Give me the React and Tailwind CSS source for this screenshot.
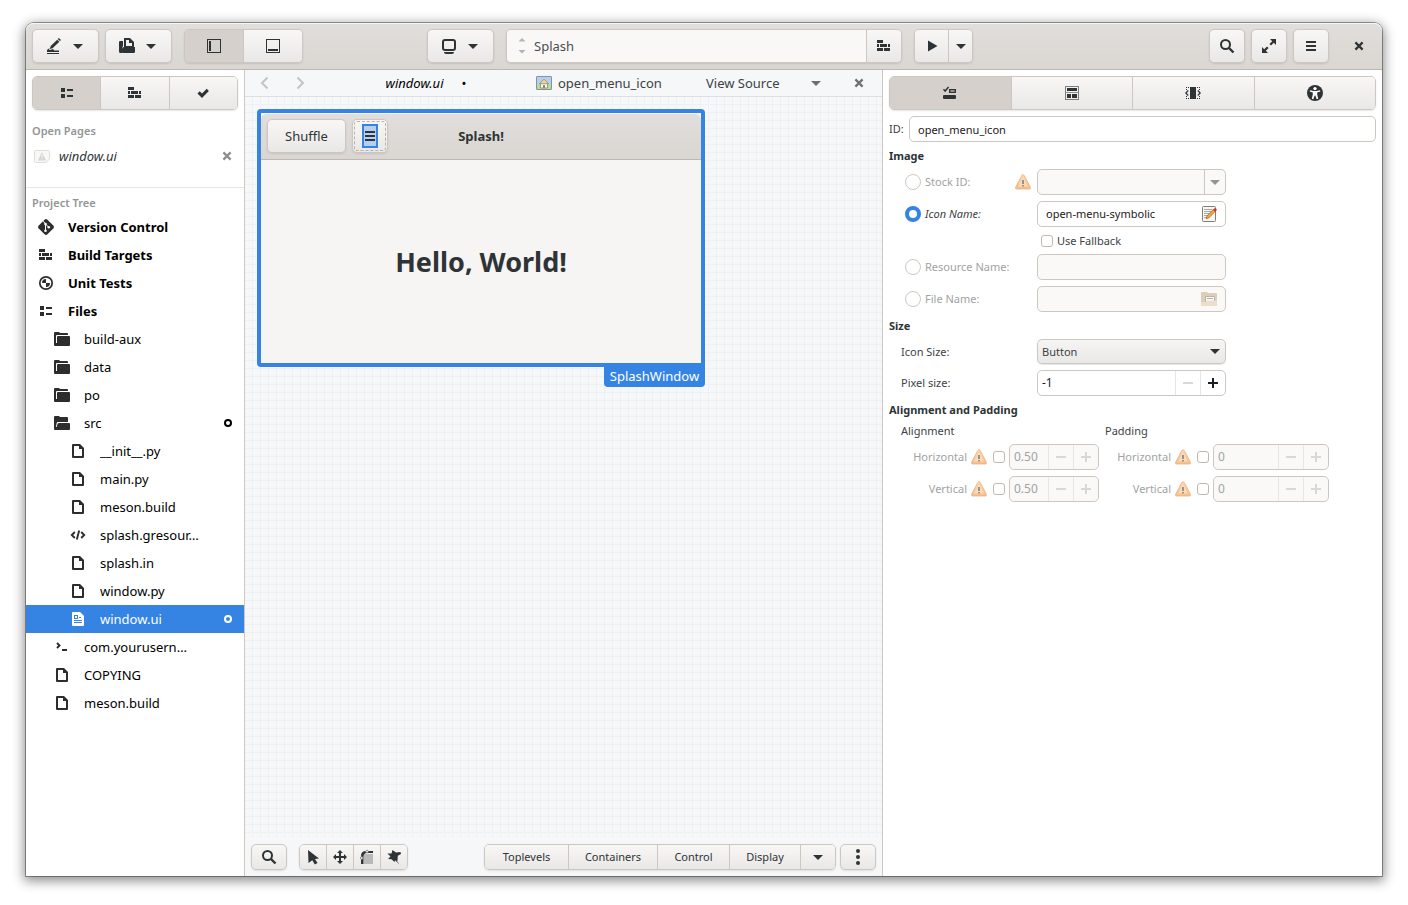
import React from "react";

const FACE =
  "bg-linear-to-b from-[#f8f7f6] to-[#eae8e6] border-[#cdc7c2] text-[#2e3436] flex items-center justify-center";
const FRAME = "border border-[#cdc7c2] rounded-[5px] overflow-hidden shadow-[0_1px_2px_rgba(0,0,0,0.1)]";
const ENTRY = "h-[26px] rounded-[5px] border border-[#cdc7c2]";

function Icon({ children, size = "size-4", className = "" }) {
  return (
    <svg viewBox="0 0 16 16" aria-hidden="true" fill="currentColor" className={`${size} shrink-0 ${className}`}>
      {children}
    </svg>
  );
}

const Caret = ({ className = "" }) => (
  <Icon className={className}>
    <path d="M3 6h10L8 11z" />
  </Icon>
);
const Pencil = () => (
  <Icon>
    <path d="M12.800 0 15 2 13.900 3.100 11.700 1.100zM11.200 1.700l2.200 2L6.500 10.200 3.800 11l.9-3z" />
    <path d="M3.600 10 3 11.800l1 .3 3-1 1.200 1.400H13V14H1v-2z" />
    <path d="M1 15h12v1H1z" />
  </Icon>
);
const Open = () => (
  <Icon>
    <path fillRule="evenodd" d="M5 0h6l4 4v6H5zm2 2v6h6V5h-3V2z" />
    <path d="M1 3h3v5l-1 2v5H1.500Q0 15 0 13.500V4q0-1 1-1z" />
    <path d="M5 9h11v4.500q0 1.500-1.500 1.500H4q-1 0-1-1v-3q0-2 2-2z" />
  </Icon>
);
const PanelLeft = () => (
  <Icon>
    <path fillRule="evenodd" d="M1 1h14v14H1zm1 1v12h12V2z" />
    <path d="M3 3h2v10H3z" />
  </Icon>
);
const PanelBottom = () => (
  <Icon>
    <path fillRule="evenodd" d="M1 1h14v14H1zm1 1v12h12V2z" />
    <path d="M3 11h10v2H3z" />
  </Icon>
);
const Monitor = () => (
  <Icon>
    <rect x="2" y="2" width="12" height="10" rx="2" fill="none" stroke="currentColor" strokeWidth="2" />
    <path d="M3 14h10q0 2-2 2H5q-2 0-2-2z" />
  </Icon>
);
const ListIcon = () => (
  <Icon>
    <path d="M2 3h4v4H2zM2 9h4v4H2zM8 4h6v2H8zM8 10h6v2H8z" />
  </Icon>
);
const Bricks = () => (
  <Icon>
    <path d="M1 2h6v3H1zM1 6h2v3H1zM4 6h7v3H4zM12 6h2v3h-2zM1 10h6v3H1zM8 10h6v3H8z" />
  </Icon>
);
const Check = () => (
  <Icon>
    <path d="M2.500 8.500 4.700 6.300 7 8.500 11.700 3.800 13.900 6 7 12.900z" />
  </Icon>
);
const Play = () => (
  <Icon>
    <path d="M4 2.500v11L13.500 8z" />
  </Icon>
);
const Search = () => (
  <Icon>
    <circle cx="6.500" cy="6.500" r="4.500" fill="none" stroke="currentColor" strokeWidth="2" />
    <path d="M10 10l4.500 4.500" stroke="currentColor" strokeWidth="2.400" />
  </Icon>
);
const Expand = () => (
  <Icon>
    <path d="M9 1h6v6l-2.200-2.200L10 7.600 8.400 6l2.800-2.800zM1 9l2.200 2.200L6 8.400 7.600 10l-2.800 2.800L7 15H1z" />
  </Icon>
);
const Menu = () => (
  <Icon>
    <path d="M3 3h10v2H3zM3 7h10v2H3zM3 11h10v2H3z" />
  </Icon>
);
const Close = () => (
  <Icon>
    <path d="M4.400 4.400l7.200 7.200M11.600 4.400l-7.200 7.200" stroke="currentColor" strokeWidth="2.200" />
  </Icon>
);
const Git = () => (
  <Icon>
    <path d="M8 0Q8.700 0 9.200.5L15.500 6.800Q16.300 8 15.500 9.200L9.200 15.500Q8 16.300 6.800 15.500L.5 9.200Q-.3 8 .5 6.800L6.800.5Q7.300 0 8 0z" />
    <path d="M5.200 2.200 7.500 4.800V12M7.500 5l3.200 3.200" fill="none" stroke="#fff" strokeWidth="1" />
    <circle cx="7.500" cy="5" r="1.300" fill="#fff" />
    <circle cx="7.500" cy="11.800" r="1.300" fill="#fff" />
    <circle cx="10.800" cy="8.300" r="1.300" fill="#fff" />
  </Icon>
);
const Tests = () => (
  <Icon>
    <circle cx="8" cy="8" r="6.200" fill="none" stroke="currentColor" strokeWidth="1.700" />
    <path d="M8 8H4a4 4 0 0 1 4-4zM8 8h4a4 4 0 0 1-4 4z" />
  </Icon>
);
const Folder = () => (
  <Icon>
    <path d="M0 2q0-1 1-1h4l1 1h7q1 0 1 1v1H3Q2 4 2 5v9H1q-1 0-1-1z" />
    <path d="M4 5h11q1 0 1 1v8q0 1-1 1H4q-1 0-1-1V6q0-1 1-1z" />
    <path d="M0 12h4v3H1q-1 0-1-1z" />
  </Icon>
);
const FolderOpen = () => (
  <Icon>
    <path d="M0 2q0-1 1-1h4l1 1h7q1 0 1 1v4H4Q3 7 2.700 8L1.500 13.800Q0 14 0 13z" />
    <path d="M5 8h10q1 0 1 1v5q0 1-1 1H3q-1 0-.8-1L3.500 9Q4 8 5 8z" />
    <path d="M0 12h3v3H1q-1 0-1-1z" />
  </Icon>
);
const FileIcon = () => (
  <Icon>
    <path fillRule="evenodd" d="M3 1h7l4 4v9q0 1-1 1H3q-1 0-1-1V2q0-1 1-1zm1 2v10h8V6H9V3z" />
  </Icon>
);
const FileFilled = () => (
  <Icon>
    <path d="M3 1h7l4 4v9q0 1-1 1H3q-1 0-1-1V2q0-1 1-1z" />
    <path d="M4 4h4v4H4zM9 6h2v1H9zM4 9h8v1H4zM4 11h8v1H4z" fill="#3584e4" />
    <path d="M5 5h2v2H5z" fill="#fff" />
  </Icon>
);
const Code = () => (
  <Icon>
    <path
      d="M4.800 5 1.800 8l3 3M11.200 5l3 3-3 3M9.200 3.500 6.800 12.500"
      fill="none"
      stroke="currentColor"
      strokeWidth="1.900"
    />
  </Icon>
);
const Prompt = () => (
  <Icon>
    <path d="M3 4l2.500 2.500L3 9" fill="none" stroke="currentColor" strokeWidth="1.900" />
    <path d="M8 10h5v2H8z" />
  </Icon>
);
const Ring = () => (
  <Icon>
    <circle cx="8" cy="8" r="3" fill="none" stroke="currentColor" strokeWidth="2" />
  </Icon>
);
const PageThumb = () => (
  <Icon>
    <path d="M1.500 2.500h13q1 0 1 1v7l-3 4h-11q-1 0-1-1v-10q0-1 1-1z" fill="#f8f8f7" stroke="#dedddb" />
    <path d="M8 4l4 8.500H4z" fill="#d5d4d2" />
    <path d="M7.500 6.500h1v3h-1zM7.500 10.200h1v1h-1z" fill="#fff" />
  </Icon>
);
const ImageIcon = () => (
  <Icon>
    <rect x=".5" y="1.500" width="15" height="13" rx=".5" fill="#b3d1f8" stroke="#8d9091" />
    <path d="M1 10h14v4H1z" fill="#b5e18b" />
    <path d="M4.500 8.500 8 5l3.500 3.500V13h-7z" fill="#f8f6f2" stroke="#8d8678" strokeWidth=".8" />
    <path d="M3.500 8.700 8 4.200l4.500 4.500z" fill="#f2dc8b" stroke="#94855b" strokeWidth=".8" />
    <path d="M7 10h2v3H7z" fill="#8d8678" />
  </Icon>
);
const Warning = () => (
  <Icon>
    <defs>
      <linearGradient id="warn" x1="0" y1="0" x2="0" y2="1">
        <stop offset="0" stopColor="#fbd9b0" />
        <stop offset="1" stopColor="#f5bd8d" />
      </linearGradient>
    </defs>
    <path
      d="M8 .7Q8.800.7 9.200 1.500L15.400 13.200Q15.900 15 14.600 15H1.400Q.1 15 .6 13.200L6.800 1.500Q7.200.7 8 .7z"
      fill="url(#warn)"
      stroke="#efae80"
      strokeWidth=".8"
    />
    <path d="M8 3.200l4.800 9.300H3.200z" fill="#fce6c6" opacity=".7" />
    <path d="M7 6h2v4H7zM7 11h2v1.500H7z" fill="#96938e" />
  </Icon>
);
const Chevron = ({ d }) => (
  <Icon>
    <path d={d} fill="none" stroke="currentColor" strokeWidth="2" />
  </Icon>
);
const Properties = () => (
  <Icon>
    <path d="M1.500 4.200 3.200 6 6.500 2" fill="none" stroke="currentColor" strokeWidth="1.500" />
    <rect x="7.700" y="4.700" width="5.600" height="2.600" fill="none" stroke="currentColor" strokeWidth="1.400" />
    <rect x="1" y="10" width="13" height="4" rx="1" />
  </Icon>
);
const Packing = () => (
  <Icon>
    <path fillRule="evenodd" opacity=".6" d="M1 1h14v14H1zm1 1v12h12V2z" />
    <path d="M3 3h10v3H3zM3 9h4v4H3zM8 9h5v4H8z" />
    <path d="M2 7h12v1H2z" opacity=".5" />
  </Icon>
);
const Common = () => (
  <Icon>
    <path d="M5 2h6v12H5z" />
    <path d="M3.200 5.500.8 8l2.400 2.500M12.800 5.500 15.200 8l-2.400 2.500" fill="none" stroke="currentColor" strokeWidth="1.300" />
    <path d="M1 2h1v1H1zM3 2h1v1H3zM1 13h1v1H1zM3 13h1v1H3zM12 2h1v1h-1zM14 2h1v1h-1zM12 13h1v1h-1zM14 13h1v1h-1zM1 4h1v1H1zM14 4h1v1h-1zM1 11h1v1H1zM14 11h1v1h-1z" />
  </Icon>
);
const Access = () => (
  <Icon>
    <circle cx="8" cy="8" r="8" />
    <circle cx="8" cy="3.600" r="1.700" fill="#fff" />
    <path d="M3 5.200 6.500 6h3l3.500-.8.300 1.300-3.100 1v2l1 4.300-1.500.4L8.300 10.500h-.6L6.300 14.200l-1.500-.4 1-4.300v-2l-3.100-1z" fill="#fff" />
  </Icon>
);
const Pointer = () => (
  <Icon>
    <path d="M3 1l11 8.500-4 .5 2.500 4-2.700 1.500L7.300 11.300 3.500 14z" />
  </Icon>
);
const Move = () => (
  <Icon>
    <path d="M8 1l3 3H9v3h3V5l3 3-3 3V9H9v3h2l-3 3-3-3h2V9H4v2L1 8l3-3v2h3V4H5z" />
  </Icon>
);
const Margin = () => (
  <Icon>
    <path d="M5 5h9v10H5z" fill="#b9b9b8" />
    <path d="M2 15V7q0-5 5-5h7v2H8Q4.500 4 4.500 8v7z" />
    <circle cx="8" cy="2.500" r="1.300" fill="#f6f5f4" stroke="#777" strokeWidth=".8" />
    <circle cx="2.700" cy="9" r="1.300" fill="#f6f5f4" stroke="#777" strokeWidth=".8" />
  </Icon>
);
const Pin = () => (
  <Icon>
    <path d="M6.500 1 10 3.500 14.500 3 15 5 11.800 6.800 11.500 12 10.500 11.500 13.500 15.500 9 11.200 8.500 13 5.500 10.200 2 10 4.500 7.500 1.500 4.500 5.500 4.500z" />
  </Icon>
);
const Kebab = () => (
  <Icon>
    <circle cx="8" cy="2" r="2" />
    <circle cx="8" cy="8" r="2" />
    <circle cx="8" cy="14" r="2" />
  </Icon>
);
const Minus = () => (
  <Icon>
    <path d="M3 7h10v2H3z" />
  </Icon>
);
const Plus = () => (
  <Icon>
    <path d="M7 3h2v4h4v2H9v4H7V9H3V7h4z" />
  </Icon>
);
const EditNote = () => (
  <Icon>
    <rect x="1.500" y=".5" width="13" height="15" rx="1" fill="#f6f6f5" stroke="#7d7f7c" />
    <path d="M3 3h8v1H3zM3 5h7v1H3zM3 7h6v1H3zM3 9h5v1H3zM3 11h3v1H3z" fill="#a9aba8" />
    <path d="M5 12.800 6 10l6-6.400 2 2L7.800 12z" fill="#f4a73b" stroke="#8f5902" strokeWidth=".6" />
    <path d="M12 3.600l1.300-1.200q1.200-.6 2 .3t.1 1.900L14 5.700z" fill="#d92b2b" />
  </Icon>
);
const FolderDoc = () => (
  <Icon>
    <path d="M1 1h5l1 1h8q1 0 1 1v11q0 1-1 1H1q-1 0-1-1V2q0-1 1-1z" fill="#dccfb5" />
    <path d="M4.500 5.500h9v6h-9z" fill="#fbfaf8" stroke="#b9b3a8" strokeWidth="1" />
    <path d="M6 7h6v1H6z" fill="#b3b0aa" />
    <path d="M0 11h5l1-1.500h10V14q0 1-1 1H1q-1 0-1-1z" fill="#e9dfca" />
  </Icon>
);

function HeaderButton({ label, width, children }) {
  return (
    <button aria-label={label} className={`${FACE} ${FRAME} h-[34px] ${width}`}>
      {children}
    </button>
  );
}

function Switcher({ items, className = "" }) {
  return (
    <div className={`${FRAME} flex h-[34px] ${className}`}>
      {items.map(([label, Glyph, active], i) => (
        <button
          key={label}
          aria-label={label}
          aria-pressed={!!active}
          className={`flex flex-1 items-center justify-center text-[#2e3436] ${i ? "border-l border-[#cdc7c2]" : ""} ${
            active ? "bg-[#d5d0cc]" : "bg-linear-to-b from-[#f8f7f6] to-[#eae8e6]"
          }`}
        >
          <Glyph />
        </button>
      ))}
    </div>
  );
}

function TitleBar() {
  return (
    <header className="grid h-[47px] grid-cols-[1fr_auto_1fr] items-center rounded-t-lg border-b border-[#bfb8b1] bg-linear-to-b from-[#e1dedb] to-[#dad6d2] px-[6px] shadow-[inset_0_1px_#f6f5f4]">
      <div className="flex">
        <HeaderButton label="New" width="w-[67px] gap-2">
          <Pencil />
          <Caret />
        </HeaderButton>
        <div className="ml-[6px]">
          <HeaderButton label="Open" width="w-[67px] gap-2">
            <Open />
            <Caret />
          </HeaderButton>
        </div>
        <Switcher
          className="ml-3 w-[119px]"
          items={[
            ["Left panel", PanelLeft, true],
            ["Bottom panel", PanelBottom],
          ]}
        />
      </div>
      <div className="mr-2 flex gap-3">
        <HeaderButton label="Device" width="w-[67px] gap-2">
          <Monitor />
          <Caret />
        </HeaderButton>
        <div className={`${FRAME} flex h-[34px] w-[396px]`}>
          <div className="flex flex-1 items-center gap-1 bg-[#f9f8f7] pl-[7px]">
            <Icon className="text-[#b3b3b1]">
              <path d="M4.500 3.500h7L8 0zM4.500 12h7L8 15.500z" />
            </Icon>
            <input
              aria-label="Project"
              defaultValue="Splash"
              className="min-w-0 flex-1 bg-transparent text-[#4a4f50] outline-none"
            />
          </div>
          <button aria-label="Build" className={`${FACE} w-[35px] border-l`}>
            <Bricks />
          </button>
        </div>
        <div className={`${FRAME} flex h-[34px] w-[59px]`}>
          <button aria-label="Run" className={`${FACE} flex-1`}>
            <Play />
          </button>
          <button aria-label="Run options" className={`${FACE} w-6 border-l`}>
            <Caret />
          </button>
        </div>
      </div>
      <div className="flex justify-end gap-[6px]">
        <HeaderButton label="Search" width="w-9">
          <Search />
        </HeaderButton>
        <HeaderButton label="Fullscreen" width="w-9">
          <Expand />
        </HeaderButton>
        <HeaderButton label="Menu" width="w-9">
          <Menu />
        </HeaderButton>
        <button aria-label="Close" className="ml-[6px] flex size-[35px] items-center justify-center text-[#2e3436]">
          <Close />
        </button>
      </div>
    </header>
  );
}

const TREE = [
  ["Version Control", Git, 0],
  ["Build Targets", Bricks, 0],
  ["Unit Tests", Tests, 0],
  ["Files", ListIcon, 0],
  ["build-aux", Folder, 1],
  ["data", Folder, 1],
  ["po", Folder, 1],
  ["src", FolderOpen, 1, true],
  ["__init__.py", FileIcon, 2],
  ["main.py", FileIcon, 2],
  ["meson.build", FileIcon, 2],
  ["splash.gresour…", Code, 2],
  ["splash.in", FileIcon, 2],
  ["window.py", FileIcon, 2],
  ["window.ui", FileFilled, 2, true],
  ["com.yourusern…", Prompt, 1],
  ["COPYING", FileIcon, 1],
  ["meson.build", FileIcon, 1],
];
const INDENT = ["pl-3 gap-[14px] font-bold", "pl-7 gap-[14px]", "pl-11 gap-[14px]"];

function Sidebar() {
  return (
    <aside className="w-[219px] shrink-0 border-r border-[#cdc7c2] bg-white text-black">
      <div className="p-[6px]">
        <Switcher
          items={[
            ["Project tree", ListIcon, true],
            ["Build targets", Bricks],
            ["Tasks", Check],
          ]}
        />
      </div>
      <h2 className="mt-[7px] px-[6px] text-[11px] leading-4 font-semibold text-[#929595]">Open Pages</h2>
      <div className="flex h-[34px] items-center px-2">
        <PageThumb />
        <span className="ml-[9px] flex-1 text-[#2e3436] italic">window.ui</span>
        <button aria-label="Close window.ui" className="mr-px text-[#8b8e8f]">
          <Close />
        </button>
      </div>
      <h2 className="mt-[14px] border-t border-[#e8e6e4] px-[6px] pt-[7px] pb-[2px] text-[11px] leading-4 font-semibold text-[#929595]">
        Project Tree
      </h2>
      <ul>
        {TREE.map(([name, Glyph, level, modified], i) => (
          <li key={i}>
            <button
              className={`flex h-7 w-full items-center pr-2 text-left ${INDENT[level]} ${
                name === "window.ui" ? "bg-[#3584e4] text-white" : ""
              }`}
            >
              <span className={name === "window.ui" ? "text-white" : "text-[#2d2d2d]"}>
                <Glyph />
              </span>
              <span className="flex-1 truncate">{name}</span>
              {modified && <Ring />}
            </button>
          </li>
        ))}
      </ul>
    </aside>
  );
}

function Preview() {
  return (
    <div className="flex w-[448px] flex-col items-end">
      <div className="w-full rounded-[4px] rounded-br-none border-4 border-[#3584e4] bg-[#f6f5f4]">
        <div className="grid h-[47px] grid-cols-[1fr_auto_1fr] items-center rounded-t-md border-b border-[#bfb8b1] bg-linear-to-b from-[#e1dedb] to-[#dad6d2] px-[6px] shadow-[inset_0_1px_#f6f5f4]">
          <div className="flex gap-[6px]">
            <button className={`${FACE} ${FRAME} h-[34px] w-[79px]`}>Shuffle</button>
            <button aria-label="Open menu" className={`${FACE} ${FRAME} h-[34px] w-9 p-px`}>
              <span className="flex h-full w-full items-center justify-center rounded-[3px] border border-dashed border-[#b5b2af]">
                <span className="flex h-6 w-4 items-center justify-center border-2 border-[#3584e4] bg-[#b4cff2]">
                  <Menu />
                </span>
              </span>
            </button>
          </div>
          <h2 className="font-bold text-[#2e3436]">Splash!</h2>
        </div>
        <p className="flex h-[203px] items-center justify-center text-[27px] font-bold text-[#2e3436]">Hello, World!</p>
      </div>
      <span className="h-5 w-[101px] rounded-b-[4px] bg-[#3584e4] text-center leading-[19px] text-white">
        SplashWindow
      </span>
    </div>
  );
}

const PALETTE = [
  ["Toplevels", "w-[83px]"],
  ["Containers", "w-[89px]"],
  ["Control", "w-[72px]"],
  ["Display", "w-[71px]"],
];

function Designer() {
  const seg = `${FACE} h-full border-l first:border-l-0`;
  return (
    <main className="flex min-w-0 flex-1 flex-col border-r border-[#cdc7c2] bg-[#f6f7f9]">
      <nav className="flex h-[27px] items-center border-b border-[#dcdee0] bg-[#f5f7f9] pl-1 text-[#3d4244]">
        <button aria-label="Back" className="flex w-8 justify-center text-[#c2c4c5]">
          <Chevron d="M10.500 2.500 5 8l5.500 5.500" />
        </button>
        <button aria-label="Forward" className="ml-[3px] flex w-8 justify-center text-[#c2c4c5]">
          <Chevron d="M5.500 2.500 11 8l-5.500 5.500" />
        </button>
        <button className="flex flex-1 items-center justify-center text-black">
          <span className="w-[76px] text-left italic">window.ui</span>
          <span>•</span>
        </button>
        <button className="flex w-32 items-center gap-[6px]">
          <ImageIcon />
          open_menu_icon
        </button>
        <button className="ml-[42px] w-[76px] text-left">View Source</button>
        <button aria-label="Views" className="ml-[26px] text-[#6e7172]">
          <Caret />
        </button>
        <button aria-label="Close page" className="mr-[15px] ml-[27px] text-[#6e7172]">
          <Close />
        </button>
      </nav>
      <section className="flex-1 bg-[linear-gradient(to_right,#eef0f2_1px,transparent_1px),linear-gradient(to_bottom,#eef0f2_1px,transparent_1px)] bg-[size:8px_8px] bg-[position:7px_7px] p-3">
        <Preview />
      </section>
      <footer className="flex h-[38px] items-center px-[6px] text-[11px] text-[#4a4f50]">
        <button aria-label="Zoom" className={`${FACE} ${FRAME} h-[26px] w-9`}>
          <Search />
        </button>
        <div className={`${FRAME} ml-3 flex h-[26px] w-[109px]`}>
          {[
            ["Select", Pointer],
            ["Drag", Move],
            ["Edit margins", Margin],
            ["Edit alignment", Pin],
          ].map(([label, Glyph]) => (
            <button key={label} aria-label={label} className={`${seg} flex-1`}>
              <Glyph />
            </button>
          ))}
        </div>
        <div className={`${FRAME} ml-auto flex h-[26px]`}>
          {PALETTE.map(([name, width]) => (
            <button key={name} className={`${seg} ${width}`}>
              {name}
            </button>
          ))}
          <button aria-label="More widgets" className={`${seg} w-[35px]`}>
            <Caret />
          </button>
        </div>
        <button aria-label="Options" className={`${FACE} ${FRAME} ml-1 h-[26px] w-9`}>
          <Kebab />
        </button>
      </footer>
    </main>
  );
}

const Radio = (props) => (
  <input
    type="radio"
    name="source"
    className="size-4 shrink-0 appearance-none rounded-full border border-[#cdc7c2] bg-white checked:border-4 checked:border-[#3584e4]"
    {...props}
  />
);
const Tick = (props) => (
  <input
    type="checkbox"
    className="size-3 shrink-0 appearance-none rounded-[3px] border border-[#bfb8b1] bg-white checked:bg-[#3584e4]"
    {...props}
  />
);

function SourceRow({ id, label, active, warn, children }) {
  return (
    <div className="flex items-center pl-4">
      <label className={`flex flex-1 items-center gap-1 ${active ? "italic" : "text-[#a0a3a3]"}`}>
        <Radio id={`${id}-radio`} defaultChecked={active} />
        {label}
      </label>
      {warn && <Warning />}
      <div className="ml-[6px] w-[189px]">{children}</div>
    </div>
  );
}

function Spin({ id, value, width, disabled, label, minusOff }) {
  const tone = disabled ? "bg-[#faf9f8] text-[#a0a3a3]" : "bg-white text-[#1c2021]";
  const off = "text-[#d9d8d6]";
  return (
    <div className={`${ENTRY} ${tone} flex overflow-hidden ${width}`}>
      <input
        id={id}
        aria-label={label}
        defaultValue={value}
        disabled={disabled}
        className="min-w-0 flex-1 bg-transparent pl-1 text-[12px] outline-none"
      />
      <button
        aria-label={`Decrease ${label}`}
        className={`flex w-[25px] items-center justify-center border-l border-[#e8e6e4] ${disabled || minusOff ? off : ""}`}
      >
        <Minus />
      </button>
      <button
        aria-label={`Increase ${label}`}
        className={`flex w-[25px] items-center justify-center border-l border-[#e8e6e4] ${disabled ? off : ""}`}
      >
        <Plus />
      </button>
    </div>
  );
}

function AxisGroup({ title, value, width }) {
  return (
    <fieldset className="flex flex-col">
      <legend className="leading-4">{title}</legend>
      <div className="mt-[5px] flex flex-col gap-[6px]">
        {["Horizontal", "Vertical"].map((axis) => {
          const id = `${title}-${axis}`;
          return (
            <div key={axis} className="flex items-center text-[#a0a3a3]">
              <label htmlFor={id} className="w-[66px] text-right">
                {axis}
              </label>
              <span className="mr-[6px] ml-1">
                <Warning />
              </span>
              <Tick aria-label={`Set ${axis} ${title}`} />
              <span className="ml-1">
                <Spin id={id} label={`${axis} ${title}`} value={value} width={width} disabled />
              </span>
            </div>
          );
        })}
      </div>
    </fieldset>
  );
}

function Inspector() {
  const heading = "font-bold leading-4 text-[#2e3436]";
  return (
    <aside className="w-[499px] shrink-0 bg-white p-[6px] text-[11px] text-[#3d4244]">
      <Switcher
        items={[
          ["General", Properties, true],
          ["Packing", Packing],
          ["Common", Common],
          ["Accessibility", Access],
        ]}
      />
      <div className="mt-[6px] flex items-center">
        <label htmlFor="object-id" className="w-5">
          ID:
        </label>
        <input
          id="object-id"
          defaultValue="open_menu_icon"
          className={`${ENTRY} min-w-0 flex-1 bg-white px-2 text-[#1c2021] outline-none`}
        />
      </div>
      <h3 className={`${heading} mt-[6px]`}>Image</h3>
      <div className="mt-[5px] flex w-[337px] flex-col gap-[6px]">
        <SourceRow id="stock" label="Stock ID:" warn>
          <div className={`${ENTRY} flex overflow-hidden bg-[#faf9f8]`}>
            <input aria-label="Stock ID" disabled className="min-w-0 flex-1 px-2 outline-none" />
            <button
              aria-label="Choose stock ID"
              className="flex w-[21px] items-center justify-center border-l border-[#cdc7c2] text-[#929595]"
            >
              <Caret />
            </button>
          </div>
        </SourceRow>
        <SourceRow id="icon" label="Icon Name:" active>
          <div className={`${ENTRY} flex items-center bg-white pr-2`}>
            <input
              aria-label="Icon name"
              defaultValue="open-menu-symbolic"
              className="min-w-0 flex-1 bg-transparent pl-2 text-[#1c2021] outline-none"
            />
            <button aria-label="Edit icon name">
              <EditNote />
            </button>
          </div>
        </SourceRow>
        <label className="ml-[152px] flex h-[15px] items-center gap-1">
          <Tick />
          Use Fallback
        </label>
        <SourceRow id="resource" label="Resource Name:">
          <input aria-label="Resource name" disabled className={`${ENTRY} block w-full bg-[#faf9f8] px-2`} />
        </SourceRow>
        <SourceRow id="file" label="File Name:">
          <div className={`${ENTRY} flex items-center bg-[#faf9f8] pr-2`}>
            <input aria-label="File name" disabled className="min-w-0 flex-1 bg-transparent pl-2" />
            <button aria-label="Browse">
              <FolderDoc />
            </button>
          </div>
        </SourceRow>
      </div>
      <h3 className={`${heading} mt-[6px]`}>Size</h3>
      <div className="mt-[5px] flex w-[337px] flex-col gap-[6px] pl-3">
        <div className="flex items-center">
          <label htmlFor="icon-size" className="flex-1">
            Icon Size:
          </label>
          <div className="relative w-[189px]">
            <select
              id="icon-size"
              className="block h-[25px] w-full appearance-none rounded-[5px] border border-[#cdc7c2] bg-linear-to-b from-[#f6f5f4] to-[#eae8e6] px-1 text-[#3d4244] shadow-[0_1px_1px_rgba(0,0,0,0.1)]"
            >
              <option>Button</option>
            </select>
            <Caret className="pointer-events-none absolute top-1 right-[3px] text-[#2e3436]" />
          </div>
        </div>
        <div className="flex items-center">
          <label htmlFor="pixel-size" className="flex-1">
            Pixel size:
          </label>
          <Spin id="pixel-size" label="pixel size" value="-1" width="w-[189px]" minusOff />
        </div>
      </div>
      <h3 className={`${heading} mt-[6px]`}>Alignment and Padding</h3>
      <div className="mt-[5px] flex gap-[6px] pl-3">
        <AxisGroup title="Alignment" value="0.50" width="w-[90px]" />
        <AxisGroup title="Padding" value="0" width="w-[116px]" />
      </div>
    </aside>
  );
}

export default function App() {
  return (
    <div className="flex min-h-screen flex-col bg-white px-[26px] pt-[23px] pb-[29px] font-['Noto_Sans',sans-serif] text-[13px] leading-5 text-[#2e3436]">
      <div className="flex flex-1 flex-col rounded-t-lg bg-white shadow-[0_0_0_1px_rgba(0,0,0,0.35),0_3px_12px_2px_rgba(0,0,0,0.45)]">
        <TitleBar />
        <div className="flex flex-1">
          <Sidebar />
          <Designer />
          <Inspector />
        </div>
      </div>
    </div>
  );
}
